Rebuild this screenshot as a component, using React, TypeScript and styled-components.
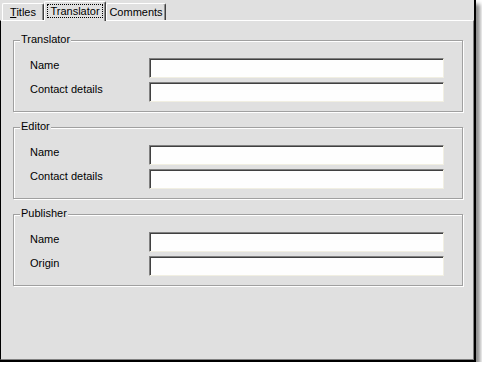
import { Fragment } from "react";
import styled, { createGlobalStyle } from "styled-components";

const GlobalStyle = createGlobalStyle`
  html, body {
    margin: 0;
    padding: 0;
    background: #ffffff;
  }
  body {
    font-family: "Liberation Sans", Arial, sans-serif;
    font-size: 11px;
    color: #000;
  }
`;

const Frame = styled.div`
  width: 476px;
  height: 362px;
  box-sizing: border-box;
  display: flex;
  flex-direction: column;
  background: #e0e0e0;
  border-right: 2px solid #000;
  border-bottom: 2px solid #000;
  box-shadow: 4px 4px 4px rgba(0, 0, 0, 0.45);
`;

const TabRow = styled.div`
  height: 20px;
  flex: none;
  display: flex;
  align-items: flex-end;
  padding-left: 2px;
`;

const Tab = styled.div<{ $active?: boolean; $w: number }>`
  position: relative;
  z-index: ${(p) => (p.$active ? 1 : 0)};
  box-sizing: border-box;
  width: ${(p) => p.$w}px;
  height: ${(p) => (p.$active ? 20 : 17)}px;
  margin-bottom: ${(p) => (p.$active ? -1 : 0)}px;
  display: flex;
  align-items: center;
  justify-content: center;
  padding-bottom: ${(p) => (p.$active ? 2 : 0)}px;
  background: #e0e0e0;
  border-top: 1px solid #fff;
  border-left: 1px solid #fff;
  border-right: 1px solid #404040;
  box-shadow: inset -1px 0 0 #909090;
  border-top-left-radius: 2px;
  border-top-right-radius: 2px;
  line-height: 12px;
  white-space: nowrap;
`;

const Focus = styled.span`
  border: 1px dotted #000;
  padding: 0 2px;
`;

const Key = styled.span`
  text-decoration: underline;
`;

const Panel = styled.div`
  flex: 1;
  display: flex;
  flex-direction: column;
  gap: 15px;
  padding: 19px 10px 0 12px;
  border-left: 1px solid #000;
  border-top: 1px solid #fff;
  border-right: 1px solid #808080;
  border-bottom: 1px solid #808080;
`;

const Group = styled.div`
  border: 1px solid #a0a0a0;
  box-shadow: inset 1px 1px 0 #fff, 1px 1px 0 #fff;
  padding: 0 18px 9px 16px;
`;

const Caption = styled.div`
  width: fit-content;
  margin: -8px 0 12px -10px;
  padding: 0 1px;
  line-height: 13px;
  background: #e0e0e0;
`;

const Fields = styled.div`
  display: grid;
  grid-template-columns: 119px 1fr;
  grid-auto-rows: 20px;
  row-gap: 4px;
`;

const Label = styled.div`
  align-self: start;
  padding-top: 1px;
  line-height: 13px;
`;

const Input = styled.input`
  box-sizing: border-box;
  width: 100%;
  height: 20px;
  margin: 0;
  padding: 0 3px;
  font: inherit;
  background: #fefefe;
  border: 1px solid;
  border-color: #808080 #f1efe2 #f1efe2 #808080;
  box-shadow: inset 1px 1px 0 #404040;
  outline: none;
`;

const groups = [
  { title: "Translator", fields: ["Name", "Contact details"] },
  { title: "Editor", fields: ["Name", "Contact details"] },
  { title: "Publisher", fields: ["Name", "Origin"] },
];

export default function App() {
  return (
    <>
      <GlobalStyle />
      <Frame>
        <TabRow>
          <Tab $w={42}>
            <span>
              <Key>T</Key>itles
            </span>
          </Tab>
          <Tab $w={62} $active>
            <Focus>Translator</Focus>
          </Tab>
          <Tab $w={60}>Comments</Tab>
        </TabRow>
        <Panel>
          {groups.map((g) => (
            <Group key={g.title}>
              <Caption>{g.title}</Caption>
              <Fields>
                {g.fields.map((f) => (
                  <Fragment key={f}>
                    <Label>{f}</Label>
                    <Input />
                  </Fragment>
                ))}
              </Fields>
            </Group>
          ))}
        </Panel>
      </Frame>
    </>
  );
}
